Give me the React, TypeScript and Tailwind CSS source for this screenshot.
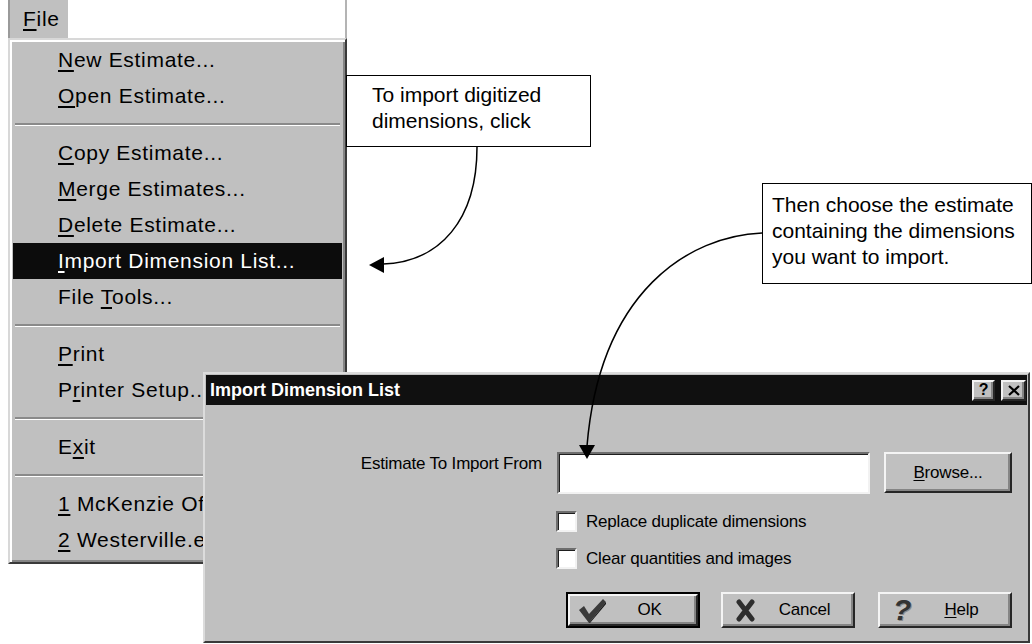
import React from "react";

type Entry = [string, string, string];

const groups: Entry[][] = [
  [
    ["", "N", "ew Estimate..."],
    ["", "O", "pen Estimate..."],
  ],
  [
    ["", "C", "opy Estimate..."],
    ["", "M", "erge Estimates..."],
    ["", "D", "elete Estimate..."],
    ["", "I", "mport Dimension List..."],
    ["File ", "T", "ools..."],
  ],
  [
    ["", "P", "rint"],
    ["P", "r", "inter Setup..."],
  ],
  [["E", "x", "it"]],
  [
    ["", "1", " McKenzie Office.est"],
    ["", "2", " Westerville.est"],
  ],
];

const raised =
  "bg-[#c0c0c0] border-2 border-t-[#f4f4f4] border-l-[#f4f4f4] border-r-[#262626] border-b-[#262626] shadow-[inset_-2px_-2px_0_#858585]";
const sunken =
  "border-2 border-t-[#6e6e6e] border-l-[#6e6e6e] border-r-[#f2f2f2] border-b-[#f2f2f2] shadow-[inset_1px_1px_0_#1e1e1e]";

const MenuItem = ({ entry, active }: { entry: Entry; active?: boolean }) => {
  const [before, key, after] = entry;
  return (
    <div
      className={`h-[36px] flex items-center pl-[45px] whitespace-pre ${
        active ? "bg-[#0c0c0c] text-white" : "text-black"
      }`}
    >
      <span>
        {before}
        <span className="underline decoration-2 underline-offset-[3px]">{key}</span>
        {after}
      </span>
    </div>
  );
};

const Separator = () => (
  <div className="h-[21px] flex items-center px-[2px]">
    <div className="w-full border-t-2 border-t-[#8a8a8a] border-b border-b-white" />
  </div>
);

const Checkbox = ({ label }: { label: string }) => (
  <div className="flex items-center ml-[350px] h-[21px] leading-[21px]">
    <div className={`w-[21px] h-[21px] bg-white ${sunken}`} />
    <span className="ml-[9px]">{label}</span>
  </div>
);

const DialogButton = ({
  icon,
  children,
  isDefault,
}: {
  icon: React.ReactNode;
  children: React.ReactNode;
  isDefault?: boolean;
}) => {
  const inner = (
    <div className={`h-full flex items-center pl-[7px] ${raised}`}>
      <div className="w-[30px] h-[28px] flex items-center justify-center">{icon}</div>
      <div className="flex-1 text-center pr-[4px]">{children}</div>
    </div>
  );
  if (isDefault) {
    return <div className="w-[134px] h-[36px] border-2 border-black">{inner}</div>;
  }
  return <div className="w-[134px] h-[36px]">{inner}</div>;
};

const CheckIcon = () => (
  <svg width="29" height="27" viewBox="0 0 29 27">
    <path d="M1 13 L6 9 L11 17 L25 2 L28 5 L11 26 Z" fill="#3a3a3a" />
    <path d="M11 26 L28 5 L28 7 L12 26 Z" fill="#151515" />
  </svg>
);

const CrossIcon = () => (
  <svg width="19" height="23" viewBox="0 0 19 23">
    <path d="M3 3 L16 20 M16 3 L3 20" stroke="#2e2e2e" strokeWidth="5" strokeLinecap="round" />
  </svg>
);

const App = () => {
  return (
    <div className="relative w-[1032px] h-[644px] overflow-hidden bg-white font-['Liberation_Sans',Arial,sans-serif]">
      {/* File menu */}
      <div className="pl-[8px] w-[347px] text-[21px] tracking-[0.7px]">
        <div className="h-[38px] flex justify-between">
          <div className="w-[60px] bg-[#c0c0c0] border-l-2 border-l-[#9a9a9a] flex items-center pl-[13px]">
            <span>
              <span className="underline decoration-2 underline-offset-[3px]">F</span>ile
            </span>
          </div>
          <div className="w-[2px] bg-[#b4b4b4]" />
        </div>
        <div className="h-[526px] bg-[#c0c0c0] border-2 border-t-[#d8d8d8] border-l-[#d8d8d8] border-r-[#3a3a3a] border-b-[#3a3a3a] shadow-[inset_2px_2px_0_#ffffff,inset_-2px_-2px_0_#858585] pt-[2px] px-[3px]">
          {groups.map((group, gi) => (
            <div key={gi}>
              {gi > 0 && <Separator />}
              {group.map((entry, i) => (
                <MenuItem key={i} entry={entry} active={entry[1] === "I"} />
              ))}
            </div>
          ))}
        </div>
      </div>

      {/* Import Dimension List dialog */}
      <div className="absolute left-[203px] top-[372px] w-[827px] h-[271px] bg-[#c0c0c0] border-2 border-t-[#dcdcdc] border-l-[#dcdcdc] border-r-[#3a3a3a] border-b-[#3a3a3a] p-[1px] flex flex-col text-[17px] leading-[20px] tracking-[-0.2px] text-black">
        <div className="h-[30px] shrink-0 bg-[#101010] flex items-center justify-between pl-[4px] pr-[1px]">
          <span className="text-white font-bold text-[18px] tracking-normal">Import Dimension List</span>
          <div className="flex gap-[6px]">
            <div className={`w-[23px] h-[21px] flex items-center justify-center font-bold text-[16px] ${raised}`}>?</div>
            <div className={`w-[25px] h-[21px] flex items-center justify-center ${raised}`}>
              <svg width="12" height="11" viewBox="0 0 12 11">
                <path d="M1 1 L11 10 M11 1 L1 10" stroke="#000" strokeWidth="2.2" />
              </svg>
            </div>
          </div>
        </div>

        <div className="flex-1 flex flex-col">
          <div className="mt-[47px] flex items-start">
            <div className="w-[336px] text-right mt-[2px]">Estimate To Import From</div>
            <div className={`ml-[15px] w-[313px] h-[42px] bg-white ${sunken}`} />
            <div className={`ml-[14px] w-[128px] h-[41px] flex items-center justify-center ${raised}`}>
              <span>
                <span className="underline underline-offset-[2px]">B</span>rowse...
              </span>
            </div>
          </div>

          <div className="mt-[17px]">
            <Checkbox label="Replace duplicate dimensions" />
          </div>
          <div className="mt-[16px]">
            <Checkbox label="Clear quantities and images" />
          </div>

          <div className="mt-[23px] ml-[360px] flex">
            <DialogButton icon={<CheckIcon />} isDefault>
              OK
            </DialogButton>
            <div className="ml-[21px]">
              <DialogButton icon={<CrossIcon />}>Cancel</DialogButton>
            </div>
            <div className="ml-[23px]">
              <DialogButton
                icon={
                  <span className="font-bold italic text-[30px] text-[#333] [text-shadow:1px_1px_0_#8a8a8a] leading-none">
                    ?
                  </span>
                }
              >
                <span className="underline underline-offset-[2px]">H</span>elp
              </DialogButton>
            </div>
          </div>
        </div>
      </div>

      {/* Callouts */}
      <div className="absolute left-[346px] top-[75px] w-[245px] h-[72px] bg-white border border-black pl-[25px] pt-[6px] text-[21px] leading-[26px] text-black">
        To import digitized
        <br />
        dimensions, click
      </div>
      <div className="absolute left-[762px] top-[183px] w-[270px] h-[101px] bg-white border border-black pl-[9px] pt-[8px] text-[21px] leading-[26px] text-black whitespace-nowrap">
        Then choose the estimate
        <br />
        containing the dimensions
        <br />
        you want to import.
      </div>

      {/* Arrows */}
      <svg className="absolute inset-0 pointer-events-none" width="1032" height="644" viewBox="0 0 1032 644">
        <path d="M477 147 C477 220 440 262 383 264" fill="none" stroke="#000" strokeWidth="1.5" />
        <polygon points="369,265 384,257 384,273" fill="#000" />
        <path d="M762 233 C690 236 600 290 587 446" fill="none" stroke="#000" strokeWidth="1.5" />
        <polygon points="587,459 579,445 595,445" fill="#000" />
      </svg>
    </div>
  );
};

export default App;
